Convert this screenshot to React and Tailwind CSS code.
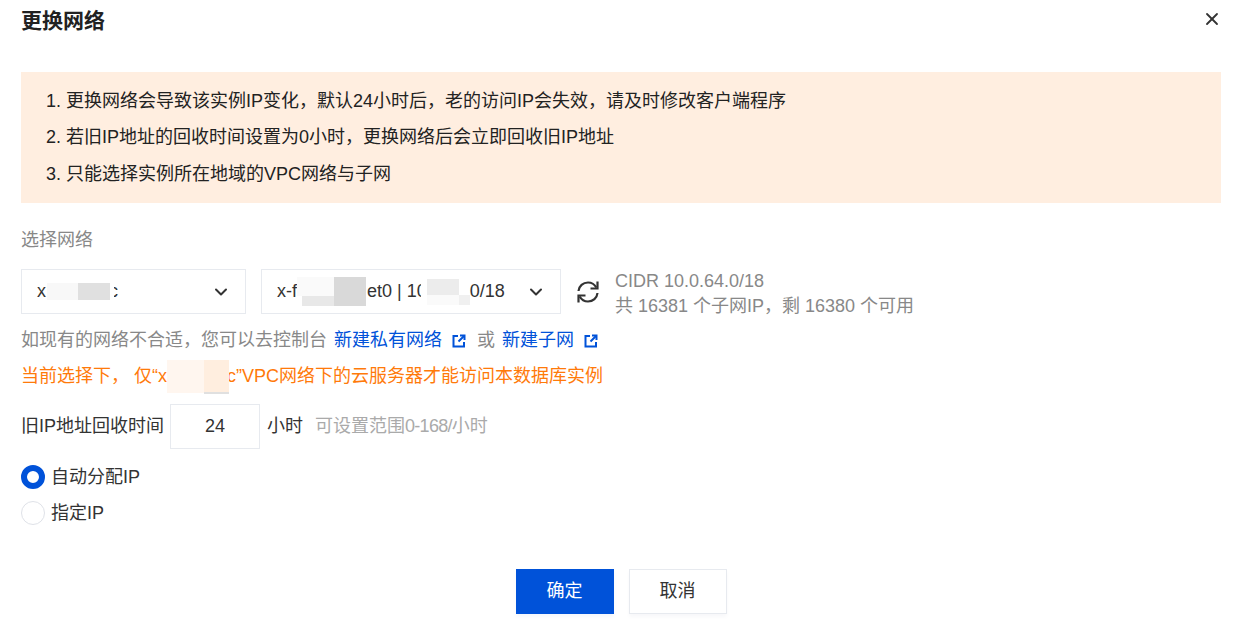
import React from 'react';
import { ChevronDown, X } from 'lucide-react';

function ExternalIcon() {
  return (
    <svg width="14" height="14" viewBox="0 0 14 14" fill="none" stroke="#0052d9" strokeWidth="2" className="shrink-0">
      <path d="M6 2H1.5v10.5H12V8" />
      <path d="M8 1.5h4.5V6" />
      <path d="M12 2L6.5 7.5" />
    </svg>
  );
}

function RefreshIcon() {
  return (
    <svg width="24" height="24" viewBox="0 0 24 24" fill="none" stroke="#333" strokeWidth="2.2">
      <path d="M2.5 11C3 6 7 2.5 12 2.5c3.6 0 6.6 1.9 8.3 5" />
      <path d="M21.5 13c-.5 5-4.5 8.5-9.5 8.5-3.6 0-6.6-1.9-8.3-5" />
      <path d="M21.5 1.5v7h-7" />
      <path d="M2.5 22.5v-7h7" />
    </svg>
  );
}

function Select({ width, children }) {
  return (
    <div className={`flex h-[45px] items-center justify-between border border-[#e7eaef] pl-[15px] pr-[14px] ${width}`}>
      <div className="flex items-center text-[18px] text-[#333]">{children}</div>
      <ChevronDown size={20} strokeWidth={2.4} color="#333" />
    </div>
  );
}

export default function App() {
  return (
    <div className="relative h-[622px] w-[1236px] overflow-hidden bg-white pl-[21px] pr-[15px] font-['Liberation_Sans','Noto_Sans_CJK_SC',sans-serif] text-[18px] text-[#333]">
      <div className="flex h-[72px] items-start justify-between">
        <h1 className="pt-[8px] text-[21px] font-bold leading-[26px] text-[#222]">更换网络</h1>
        <X size={20} strokeWidth={2.2} color="#333" className="-mr-[1px] mt-[9px]" />
      </div>

      {/* warning */}
      <div className="flex h-[131px] flex-col justify-center bg-[#ffeee0] pl-[25px] text-[18px] leading-[36.5px] text-[#222]">
        <div>1. 更换网络会导致该实例IP变化，默认24小时后，老的访问IP会失效，请及时修改客户端程序</div>
        <div>2. 若旧IP地址的回收时间设置为0小时，更换网络后会立即回收旧IP地址</div>
        <div>3. 只能选择实例所在地域的VPC网络与子网</div>
      </div>

      <div className="mt-[24px] leading-[26px] text-[#888]">选择网络</div>

      {/* selects */}
      <div className="mt-[16px] flex h-[45px] items-center">
        <Select width="w-[225px]">
          <span>x</span>
          <span className="relative ml-[1px] inline-block h-[17px] w-[62px]">
            <span className="absolute left-0 top-0 h-[17px] w-[31px] bg-[#f8f8f8]" />
            <span className="absolute left-[31px] top-0 h-[17px] w-[32px] bg-[#e0e0e0]" />
            <span className="absolute left-[63px] top-0 h-[17px] w-[4px] bg-white" />
          </span>
          <span>c</span>
        </Select>
        <div className="ml-[15px]">
          <Select width="w-[300px]">
            <span>x-f</span>
            <span className="relative inline-block h-[29px] w-[70px]">
              <span className="absolute left-0 top-0 h-[19px] w-[37px] bg-[#fafafa]" />
              <span className="absolute left-[5px] top-[19px] h-[10px] w-[32px] bg-[#e8e8e8]" />
              <span className="absolute left-[37px] top-0 h-[29px] w-[32px] bg-[#d9d9d9]" />
            </span>
            <span className="whitespace-pre">et0 | 10</span>
            <span className="relative inline-block h-[26px] w-[43px]">
              <span className="absolute -left-[6px] top-0 h-[26px] w-[6px] bg-white" />
              <span className="absolute left-0 top-0 h-[16px] w-[32px] bg-[#ececec]" />
              <span className="absolute left-0 top-[16px] h-[10px] w-[32px] bg-[#fafafa]" />
              <span className="absolute left-[32px] top-[16px] h-[10px] w-[11px] bg-[#f0f0f0]" />
            </span>
            <span>0/18</span>
          </Select>
        </div>
        <div className="ml-[15px] shrink-0">
          <RefreshIcon />
        </div>
        <div className="ml-[15px] pt-[4px] text-[18px] leading-[25px] text-[#888]">
          <div>CIDR 10.0.64.0/18</div>
          <div>共 16381 个子网IP，剩 16380 个可用</div>
        </div>
      </div>

      {/* hint */}
      <div className="mt-[13px] flex h-[27px] items-center text-[#888]">
        <span>如现有的网络不合适，您可以去控制台</span>
        <span className="ml-[7px] text-[#0052d9]">新建私有网络</span>
        <span className="ml-[10px]"><ExternalIcon /></span>
        <span className="ml-[11px]">或</span>
        <span className="ml-[7px] text-[#0052d9]">新建子网</span>
        <span className="ml-[10px]"><ExternalIcon /></span>
      </div>

      <div className="mt-[9px] flex h-[27px] items-center text-[#ff7a0a]">
        <span>当前选择下， 仅“x</span>
        <span className="relative inline-block h-[27px] w-[60px]">
          <span className="absolute -top-[3px] left-0 h-[33px] w-[37px] bg-[#fff6ef]" />
          <span className="absolute -top-[3px] left-[37px] h-[33px] w-[25px] bg-[#ffeedf]" />
          <span className="absolute left-[37px] top-[29px] h-[2px] w-[25px] bg-[#e0e0e0]" />
        </span>
        <span>c”VPC网络下的云服务器才能访问本数据库实例</span>
      </div>

      {/* recycle time */}
      <div className="mt-[14px] flex h-[45px] items-center">
        <span>旧IP地址回收时间</span>
        <div className="ml-[6px] flex h-[45px] w-[90px] items-center justify-center border border-[#e7eaef]">24</div>
        <span className="ml-[7px]">小时</span>
        <span className="ml-[12px] text-[#aaa]">
          可设置范围<span className="tracking-[-0.7px]">0-168/</span>小时
        </span>
      </div>

      {/* radios */}
      <div className="mt-[16px] flex h-[24px] items-center">
        <span className="h-[24px] w-[24px] rounded-full border-[6.5px] border-[#0052d9] bg-white" />
        <span className="ml-[6px]">自动分配IP</span>
      </div>
      <div className="mt-[12px] flex h-[24px] items-center">
        <span className="h-[24px] w-[24px] rounded-full border border-[#dfe2e8] bg-white" />
        <span className="ml-[6px]">指定IP</span>
      </div>

      {/* footer */}
      <div className="mt-[44px] flex justify-center gap-[15px]">
        <button className="h-[45px] w-[98px] bg-[#0052d9] text-[18px] text-white shadow-[0_3px_4px_#f4f7fd]">确定</button>
        <button className="h-[45px] w-[98px] border border-[#e7eaef] bg-white text-[18px] text-[#333] shadow-[0_3px_4px_#f8f8fa]">取消</button>
      </div>
    </div>
  );
}
